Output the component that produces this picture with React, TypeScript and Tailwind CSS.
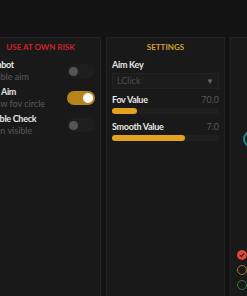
import React from "react";

const toggles = [
  { label: "Aimbot", hint: "Enable aim", on: false },
  { label: "Fov Aim", hint: "Draw fov circle", on: true },
  { label: "Visible Check", hint: "Seen visible", on: false },
];

function Toggle({ on }: { on: boolean }) {
  return on ? (
    <div className="flex h-[14px] w-[28px] shrink-0 items-center justify-end rounded-full bg-[#b5851b] pr-[2px]">
      <div className="h-[10px] w-[10px] rounded-full bg-white" />
    </div>
  ) : (
    <div className="flex h-[14px] w-[28px] shrink-0 items-center rounded-full bg-[#1e1e1e] pl-[2px]">
      <div className="h-[9px] w-[9px] rounded-full bg-[#555555]" />
    </div>
  );
}

function Slider({ label, value, pct }: { label: string; value: string; pct: number }) {
  return (
    <>
      <div className="flex items-center justify-between leading-[12px]">
        <span className="text-[9px] font-bold tracking-[-0.3px] text-[#e6e6e6]">{label}</span>
        <span className="text-[9px] text-[#575757]">{value}</span>
      </div>
      <div className="mt-[2px] h-[6px] w-full rounded-full bg-[#1f1f1f]">
        <div className="h-full rounded-full bg-[#e2a21f]" style={{ width: `${pct}%` }} />
      </div>
    </>
  );
}

export default function App() {
  return (
    <div className="relative h-[296px] w-[247px] overflow-hidden bg-[#131313] font-['Lato',sans-serif]">
      <div className="-ml-[20px] flex h-full gap-[5px] pt-[37px]">
        {/* left panel */}
        <div className="flex w-[121px] shrink-0 flex-col border border-b-0 border-[#232323] bg-[#191919]">
          <div className="flex h-[17px] items-center justify-center text-[8px] font-bold text-[#d0212b]">
            USE AT OWN RISK
          </div>
          <div className="mt-[4px] flex flex-col gap-[3px] px-[5px]">
            {toggles.map((t) => (
              <div key={t.label} className="flex items-center justify-between">
                <div className="flex flex-col leading-[12px]">
                  <span className="text-[9px] font-bold tracking-[-0.3px] text-[#e6e6e6]">{t.label}</span>
                  <span className="text-[9px] text-[#5a5a5a]">{t.hint}</span>
                </div>
                <Toggle on={t.on} />
              </div>
            ))}
          </div>
        </div>

        {/* settings panel */}
        <div className="flex w-[119px] shrink-0 flex-col border border-b-0 border-[#232323] bg-[#191919]">
          <div className="flex h-[17px] items-center justify-center text-[8px] font-bold text-[#d6a132]">
            SETTINGS
          </div>
          <div className="flex flex-col px-[5px]">
            <div className="mt-[4px] text-[9px] font-bold leading-[12px] tracking-[-0.3px] text-[#e6e6e6]">
              Aim Key
            </div>
            <div className="mt-[2px] flex h-[16px] items-center justify-between border border-[#222222] bg-[#1c1c1c] pl-[4px] pr-[4px]">
              <span className="text-[9px] text-[#4c4c4c]">LClick</span>
              <span className="text-[8px] text-[#6a6a6a]">▼</span>
            </div>
            <div className="mt-[5px]">
              <Slider label="Fov Value" value="70.0" pct={23} />
            </div>
            <div className="mt-[7px]">
              <Slider label="Smooth Value" value="7.0" pct={68} />
            </div>
          </div>
        </div>

        {/* right panel */}
        <div className="flex w-[80px] shrink-0 flex-col border border-b-0 border-[#232323] bg-[#191919]">
          <div className="h-[17px]" />
          <svg className="ml-[9px] mt-[74px]" width="20" height="20" viewBox="0 0 20 20">
            <circle cx="11" cy="10" r="7" fill="none" stroke="#178c8e" strokeWidth="2" />
          </svg>
          <div className="mt-auto flex flex-col gap-[5px] pb-[6px] pl-[6px]">
            <div className="flex h-[10px] w-[10px] items-center justify-center rounded-full bg-[#d8473a]">
              <svg width="6" height="6" viewBox="0 0 6 6">
                <path d="M1 3.2 L2.4 4.5 L5 1.6" fill="none" stroke="#3a1512" strokeWidth="1.1" />
              </svg>
            </div>
            <div className="h-[10px] w-[10px] rounded-full border-[1.5px] border-[#a07b34]" />
            <div className="h-[10px] w-[10px] rounded-full border-[1.5px] border-[#2f7b3b]" />
          </div>
        </div>
      </div>
    </div>
  );
}
